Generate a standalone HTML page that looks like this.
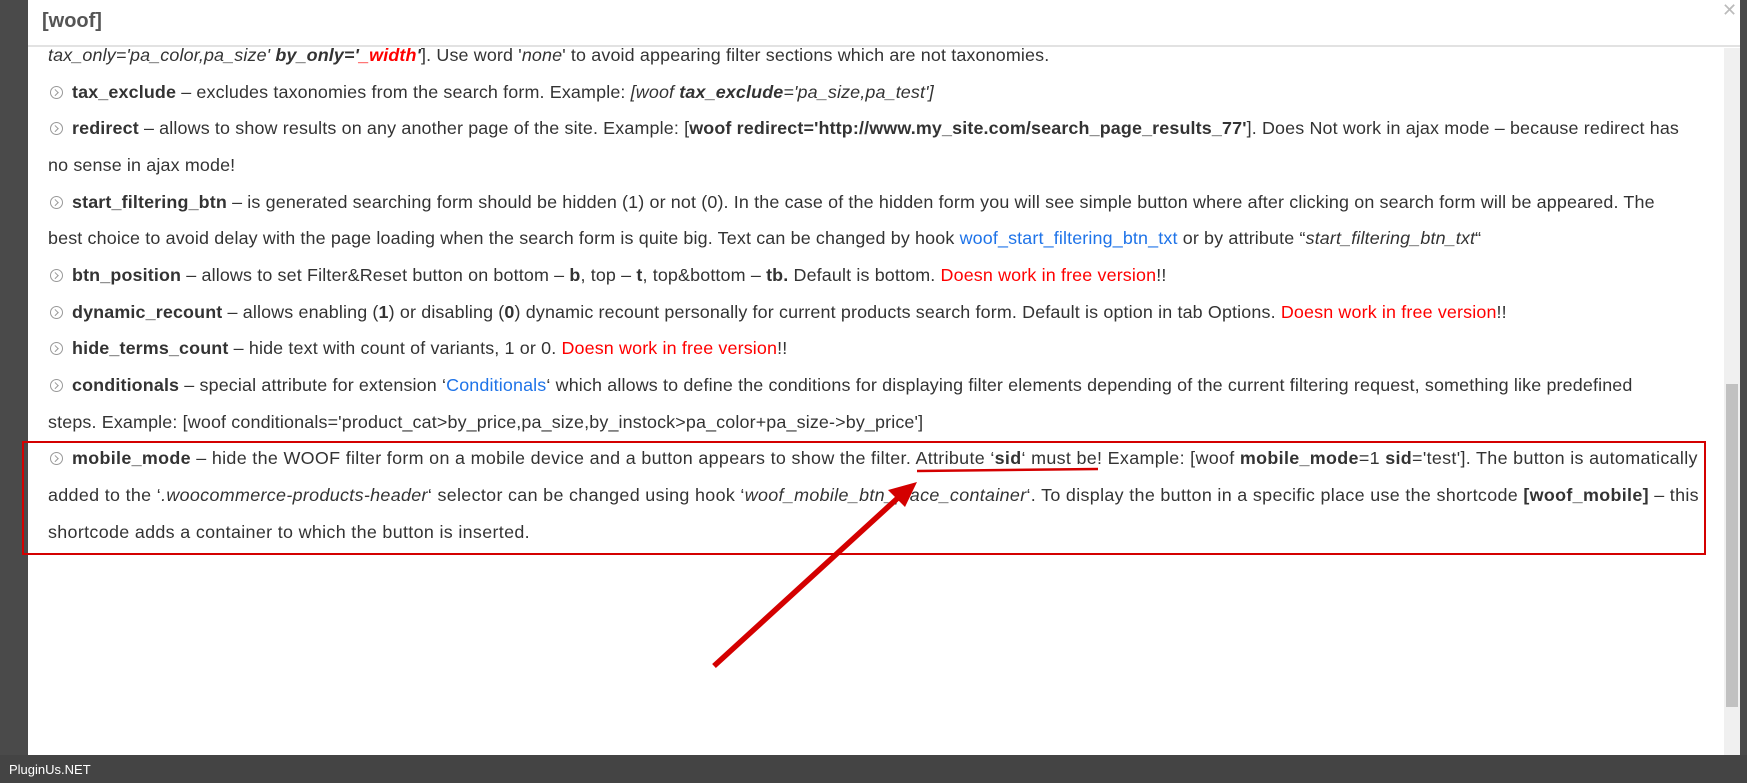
<!DOCTYPE html>
<html><head><meta charset="utf-8"><style>
*{margin:0;padding:0;box-sizing:border-box}
body{width:1747px;height:783px;overflow:hidden;background:#4a4a4a;font-family:"Liberation Sans",sans-serif;position:relative}
#modal{position:absolute;left:28px;top:0;width:1712px;height:755px;background:#fff;overflow:hidden}
#hdr{position:absolute;left:0;top:0;width:1712px;height:47px;border-bottom:2px solid #e2e2e2}
#hdr .t{position:absolute;left:14px;top:10px;font-size:20px;font-weight:bold;color:#555}
#hdr .x{position:absolute;left:1694px;top:0px;font-size:18px;color:#bbb}
#sb{position:absolute;left:1696px;top:48px;width:16px;height:707px;background:#f0f0f0}
#thumb{position:absolute;left:2px;top:336px;width:12px;height:323px;background:#c1c1c1}
.l{position:absolute;left:20px;white-space:nowrap;font-size:17.9px;color:#333;line-height:20px;letter-spacing:0.15px}
.m{letter-spacing:0.33px}
.i{display:inline-block;width:13px;height:13px;border:1.3px solid #999;border-radius:50%;margin:0 9px 0 2px;vertical-align:-1px;position:relative}
.i:after{content:"";position:absolute;left:2.3px;top:3px;width:3.5px;height:3.5px;border-top:1.3px solid #999;border-right:1.3px solid #999;transform:rotate(45deg)}
.r{color:#f00}.b{color:#1e73e8}
#bar{position:absolute;left:0;top:755px;width:1747px;height:28px;background:#444;color:#fff;font-size:13px;padding:7px 9px}
#box{position:absolute;left:22px;top:441px;width:1684px;height:114px;border:2px solid #d40000}
</style></head><body>
<div id="modal">
<div id="hdr"><span class="t">[woof]</span><span class="x">✕</span></div>
<div class="l" style="top:45px"><i>tax_only='pa_color,pa_size'</i> <b><i>by_only='<span class="r">_width</span>'</i></b>]. Use word '<i>none</i>' to avoid appearing filter sections which are not taxonomies.</div>
<div class="l" style="top:82px"><span class="i"></span><b>tax_exclude</b> – excludes taxonomies from the search form. Example: <i>[woof <b>tax_exclude</b>='pa_size,pa_test']</i></div>
<div class="l" style="top:118px"><span class="i"></span><b>redirect</b> – allows to show results on any another page of the site. Example: [<b>woof redirect='http://www.my_site.com/search_page_results_77'</b>]. Does Not work in ajax mode – because redirect has</div>
<div class="l" style="top:155px">no sense in ajax mode!</div>
<div class="l" style="top:192px"><span class="i"></span><b>start_filtering_btn</b> – is generated searching form should be hidden (1) or not (0). In the case of the hidden form you will see simple button where after clicking on search form will be appeared. The</div>
<div class="l" style="top:228px">best choice to avoid delay with the page loading when the search form is quite big. Text can be changed by hook <span class="b">woof_start_filtering_btn_txt</span> or by attribute “<i>start_filtering_btn_txt</i>“</div>
<div class="l" style="top:265px"><span class="i"></span><b>btn_position</b> – allows to set Filter&amp;Reset button on bottom – <b>b</b>, top – <b>t</b>, top&amp;bottom – <b>tb.</b> Default is bottom. <span class="r">Doesn work in free version</span>!!</div>
<div class="l" style="top:302px"><span class="i"></span><b>dynamic_recount</b> – allows enabling (<b>1</b>) or disabling (<b>0</b>) dynamic recount personally for current products search form. Default is option in tab Options. <span class="r">Doesn work in free version</span>!!</div>
<div class="l" style="top:338px"><span class="i"></span><b>hide_terms_count</b> – hide text with count of variants, 1 or 0. <span class="r">Doesn work in free version</span>!!</div>
<div class="l" style="top:375px"><span class="i"></span><b>conditionals</b> – special attribute for extension ‘<span class="b">Conditionals</span>‘ which allows to define the conditions for displaying filter elements depending of the current filtering request, something like predefined</div>
<div class="l" style="top:412px">steps. Example: [woof conditionals='product_cat&gt;by_price,pa_size,by_instock&gt;pa_color+pa_size-&gt;by_price']</div>
<div class="l m" style="top:448px"><span class="i"></span><b>mobile_mode</b> – hide the WOOF filter form on a mobile device and a button appears to show the filter. Attribute ‘<b>sid</b>‘ must be! Example: [woof <b>mobile_mode</b>=1 <b>sid</b>='test']. The button is automatically</div>
<div class="l m" style="top:485px">added to the ‘<i>.woocommerce-products-header</i>‘ selector can be changed using hook ‘<i>woof_mobile_btn_place_container</i>‘. To display the button in a specific place use the shortcode <b>[woof_mobile]</b> – this</div>
<div class="l m" style="top:522px">shortcode adds a container to which the button is inserted.</div>
<div id="sb"><div id="thumb"></div></div>
</div>
<div id="box"></div>
<svg style="position:absolute;left:0;top:0" width="1747" height="783">
<path d="M917 471 L1098 469" stroke="#d40000" stroke-width="2.5" fill="none"/>
<path d="M714 666 L900 496" stroke="#d40000" stroke-width="5.5" fill="none"/>
<path d="M917 482 L888 490 L905 507 Z" fill="#d40000"/>
</svg>
<div id="bar">PluginUs.NET</div>
</body></html>
